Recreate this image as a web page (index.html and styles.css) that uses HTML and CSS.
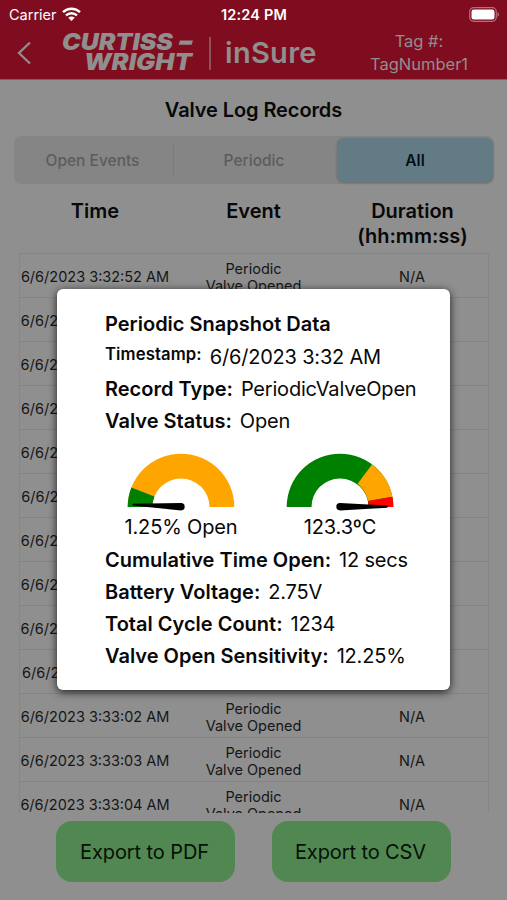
FILE: index.html
```html
<!DOCTYPE html>
<html lang="en">
<head>
    <meta charset="UTF-8">
    <meta name="viewport" content="width=device-width, initial-scale=1.0">
    <title>inSure - Valve Log Records</title>
    <link rel="stylesheet" href="styles.css">
</head>
<body>
    <header>
        <div class="status-bar">
            <div class="carrier">
                <span>Carrier</span>
                <svg class="wifi" width="19" height="14" viewBox="0 0 19 14">
                    <path d="M1 5.2a12.2 12.2 0 0 1 17 0" />
                    <path d="M4 8.4a8 8 0 0 1 11 0" />
                    <path class="dot" d="M6.3 10.8a4.6 4.6 0 0 1 6.4 0L9.500 14z" />
                </svg>
            </div>
            <span class="clock">12:24 PM</span>
            <svg class="battery" width="31" height="15" viewBox="0 0 31 15">
                <rect class="case" x="0.700" y="0.700" width="26.600" height="13.600" rx="4" />
                <rect class="level" x="2.500" y="2.500" width="23" height="10" rx="2.200" />
                <path class="tip" d="M28.500 5v5q1.500-.8 1.500-2.500T28.500 5z" />
            </svg>
        </div>
        <div class="nav-bar">
            <svg class="back" width="15" height="24" viewBox="0 0 15 24"><path d="M13 1.500L2 12l11 10.500" /></svg>
            <svg class="logo" width="134" height="42" viewBox="0 0 134 42">
                <text x="1" y="18" textLength="111" lengthAdjust="spacingAndGlyphs">CURTISS</text>
                <path d="M119 8.500h13l-1.400 4.200h-13z" />
                <text x="23" y="38" textLength="108" lengthAdjust="spacingAndGlyphs">WRIGHT</text>
            </svg>
            <span class="divider"></span>
            <span class="product">inSure</span>
            <div class="tag">Tag #:<br>TagNumber1</div>
        </div>
    </header>

    <main>
        <h1>Valve Log Records</h1>
        <div class="segments">
            <button class="segment">Open Events</button>
            <button class="segment">Periodic</button>
            <button class="segment active">All</button>
        </div>
        <div class="columns">
            <div>Time</div>
            <div>Event</div>
            <div>Duration<br>(hh:mm:ss)</div>
        </div>
        <div class="records">
            <div class="record"><span>6/6/2023 3:32:52 AM</span><span>Periodic<br>Valve Opened</span><span>N/A</span></div>
            <div class="record"><span>6/6/2023 3:32:53 AM</span><span>Periodic<br>Valve Opened</span><span>N/A</span></div>
            <div class="record"><span>6/6/2023 3:32:54 AM</span><span>Periodic<br>Valve Opened</span><span>N/A</span></div>
            <div class="record"><span>6/6/2023 3:32:55 AM</span><span>Periodic<br>Valve Opened</span><span>N/A</span></div>
            <div class="record"><span>6/6/2023 3:32:56 AM</span><span>Periodic<br>Valve Opened</span><span>N/A</span></div>
            <div class="record"><span>6/6/2023 3:32:57 AM</span><span>Periodic<br>Valve Opened</span><span>N/A</span></div>
            <div class="record"><span>6/6/2023 3:32:58 AM</span><span>Periodic<br>Valve Opened</span><span>N/A</span></div>
            <div class="record"><span>6/6/2023 3:32:59 AM</span><span>Periodic<br>Valve Opened</span><span>N/A</span></div>
            <div class="record"><span>6/6/2023 3:33:00 AM</span><span>Periodic<br>Valve Opened</span><span>N/A</span></div>
            <div class="record"><span>6/6/2023 3:33:01 AM</span><span>Periodic<br>Valve Opened</span><span>N/A</span></div>
            <div class="record"><span>6/6/2023 3:33:02 AM</span><span>Periodic<br>Valve Opened</span><span>N/A</span></div>
            <div class="record"><span>6/6/2023 3:33:03 AM</span><span>Periodic<br>Valve Opened</span><span>N/A</span></div>
            <div class="record"><span>6/6/2023 3:33:04 AM</span><span>Periodic<br>Valve Opened</span><span>N/A</span></div>
        </div>
        <div class="actions">
            <button class="export">Export to PDF</button>
            <button class="export">Export to CSV</button>
        </div>
    </main>

    <div class="modal">
        <h2>Periodic Snapshot Data</h2>
        <div class="line"><b class="small">Timestamp:</b><span>6/6/2023 3:32 AM</span></div>
        <div class="line"><b>Record Type:</b><span>PeriodicValveOpen</span></div>
        <div class="line"><b>Valve Status:</b><span>Open</span></div>
        <div class="gauges">
            <div class="gauge">
                <svg width="108" height="60" viewBox="0 0 108 60">
                    <path fill="orange" d="M.7 54A53.300 53.300 0 0 1 107.300 54H82.500A28.500 28.500 0 0 0 25.500 54z" />
                    <path fill="green" d="M.7 54A53.300 53.300 0 0 1 4.400 34.400L27.400 43.600A28.500 28.500 0 0 0 25.500 54z" />
                    <path d="M5.500 50.800L54 50A3.700 3.700 0 0 1 54 57.400L5.500 52.600z" />
                </svg>
                <span>1.25% Open</span>
            </div>
            <div class="gauge">
                <svg width="108" height="60" viewBox="0 0 108 60">
                    <path fill="green" d="M.7 54A53.300 53.300 0 0 1 107.300 54H82.500A28.500 28.500 0 0 0 25.500 54z" />
                    <path fill="orange" d="M86 11.400A53.300 53.300 0 0 1 106.500 43.700L82 48A28.500 28.500 0 0 0 71.600 30.800z" />
                    <path fill="red" d="M106.500 43.700A53.300 53.300 0 0 1 107.300 54H82.500A28.500 28.500 0 0 0 82 48z" />
                    <path d="M101.500 52.600L54 50A3.700 3.700 0 0 0 54 57.400L101.500 54.700z" />
                </svg>
                <span>123.3ºC</span>
            </div>
        </div>
        <div class="line"><b>Cumulative Time Open:</b><span>12 secs</span></div>
        <div class="line"><b>Battery Voltage:</b><span>2.75V</span></div>
        <div class="line"><b>Total Cycle Count:</b><span>1234</span></div>
        <div class="line"><b>Valve Open Sensitivity:</b><span>12.25%</span></div>
    </div>
</body>
</html>
```
FILE: styles.css
```css
* {
    box-sizing: border-box;
}
body {
    font-family: Inter, "Liberation Sans", sans-serif;
    margin: 0;
    height: 900px;
    overflow: hidden;
    background-color: #8f8f8f;
    color: #080808;
}
header {
    height: 80px;
    background-color: #800c20;
    border-bottom: 1px solid #8c5660;
    color: #918e8e;
}
.status-bar {
    height: 28px;
    padding: 0 7px 0 9px;
    display: grid;
    grid-template-columns: 1fr auto 1fr;
    align-items: center;
    color: #fff;
    font-size: 14.5px;
}
.carrier {
    display: flex;
    align-items: center;
    gap: 5px;
}
.wifi {
    fill: none;
    stroke: #fff;
    stroke-width: 2.4;
}
.wifi .dot {
    fill: #fff;
    stroke: none;
}
.clock {
    margin-right: 1px;
    font-weight: 600;
    letter-spacing: 0.2px;
}
.battery {
    justify-self: end;
}
.battery .case {
    fill: none;
    stroke: #b0707c;
    stroke-width: 1.2;
}
.battery .level {
    fill: #fff;
}
.battery .tip {
    fill: #b0707c;
}
.nav-bar {
    height: 50px;
    display: flex;
    align-items: center;
    padding-left: 17px;
}
.back path {
    fill: none;
    stroke: #918e8e;
    stroke-width: 2.3;
}
.logo {
    margin-left: 29px;
    fill: #918e8e;
    font-size: 22.5px;
    font-weight: 900;
    font-style: italic;
}
.divider {
    width: 2px;
    height: 33px;
    margin-left: 14px;
    background-color: #87555c;
}
.product {
    width: 93px;
    margin-left: 14px;
    padding-bottom: 2px;
    font-size: 29px;
    font-weight: 600;
    letter-spacing: 0.3px;
}
.tag {
    width: 110px;
    margin-left: 46px;
    text-align: center;
    font-size: 16.5px;
    line-height: 23px;
}
main {
    display: flex;
    flex-direction: column;
}
h1 {
    margin: 17px 0 0;
    text-align: center;
    font-size: 20px;
    font-weight: 600;
    line-height: 26px;
    letter-spacing: -0.1px;
}
.segments {
    display: grid;
    grid-template-columns: 160px 163px 1fr;
    height: 48px;
    margin: 13px 13px 0 14px;
    border-radius: 7px;
    background-color: #858585;
}
.segment {
    padding: 0 3px 0 0;
    border: none;
    background: none;
    font: 500 15.5px Inter, sans-serif;
    color: #5c5c5c;
}
.segment:first-child {
    background: linear-gradient(#7b7b7b, #7b7b7b) right center / 1px 33px no-repeat;
}
.segment.active {
    margin: 2px 1px 2px 0;
    padding: 0;
    border-radius: 7px;
    background-color: #627b84;
    box-shadow: 0 1px 3px rgba(0, 0, 0, 0.2);
    font-weight: 600;
    color: #060c16;
}
.columns {
    display: grid;
    grid-template-columns: 152px 165px 153px;
    height: 54px;
    margin: 15px 18px 0 19px;
    text-align: center;
    font-size: 20px;
    font-weight: 600;
    line-height: 25px;
}
.records {
    height: 560px;
    margin: 0 18px 0 19px;
    overflow: hidden;
    border: 1px solid #868686;
    border-bottom: none;
}
.record {
    display: grid;
    grid-template-columns: 150px 167px 150px;
    align-items: center;
    height: 44px;
    border-bottom: 1px solid #848484;
    text-align: center;
    font-size: 14.5px;
    line-height: 17px;
    color: #161616;
}
.record span {
    padding-top: 2px;
}
.actions {
    display: flex;
    gap: 37px;
    margin: 8px 56px 0;
}
.export {
    width: 179px;
    height: 61px;
    padding: 0 2px 0 0;
    border: none;
    border-radius: 16px;
    background-color: #518751;
    font: 20px Inter, sans-serif;
    letter-spacing: -0.1px;
    color: #061006;
}
.modal {
    position: absolute;
    top: 289px;
    left: 57px;
    width: 393px;
    height: 401px;
    padding: 19px 0 0 48px;
    border-radius: 6px;
    background-color: #fff;
    box-shadow: 0 2px 9px rgba(0, 0, 0, 0.8);
    font-size: 20px;
}
h2 {
    margin: 0;
    font-size: 20px;
    font-weight: 600;
    line-height: 32px;
}
.line {
    display: flex;
    gap: 8px;
    height: 32px;
    line-height: 34px;
    white-space: nowrap;
}
.line span {
    letter-spacing: -0.2px;
}
.line b {
    font-weight: 600;
}
.line .small {
    font-size: 16.7px;
    line-height: 28px;
    letter-spacing: 0.1px;
}
.gauges {
    display: flex;
    gap: 51px;
    padding: 17px 0 0 22px;
    height: 107px;
}
.gauge {
    display: flex;
    flex-direction: column;
    align-items: center;
    width: 108px;
    line-height: 28px;
    letter-spacing: -0.15px;
    white-space: nowrap;
}
```
